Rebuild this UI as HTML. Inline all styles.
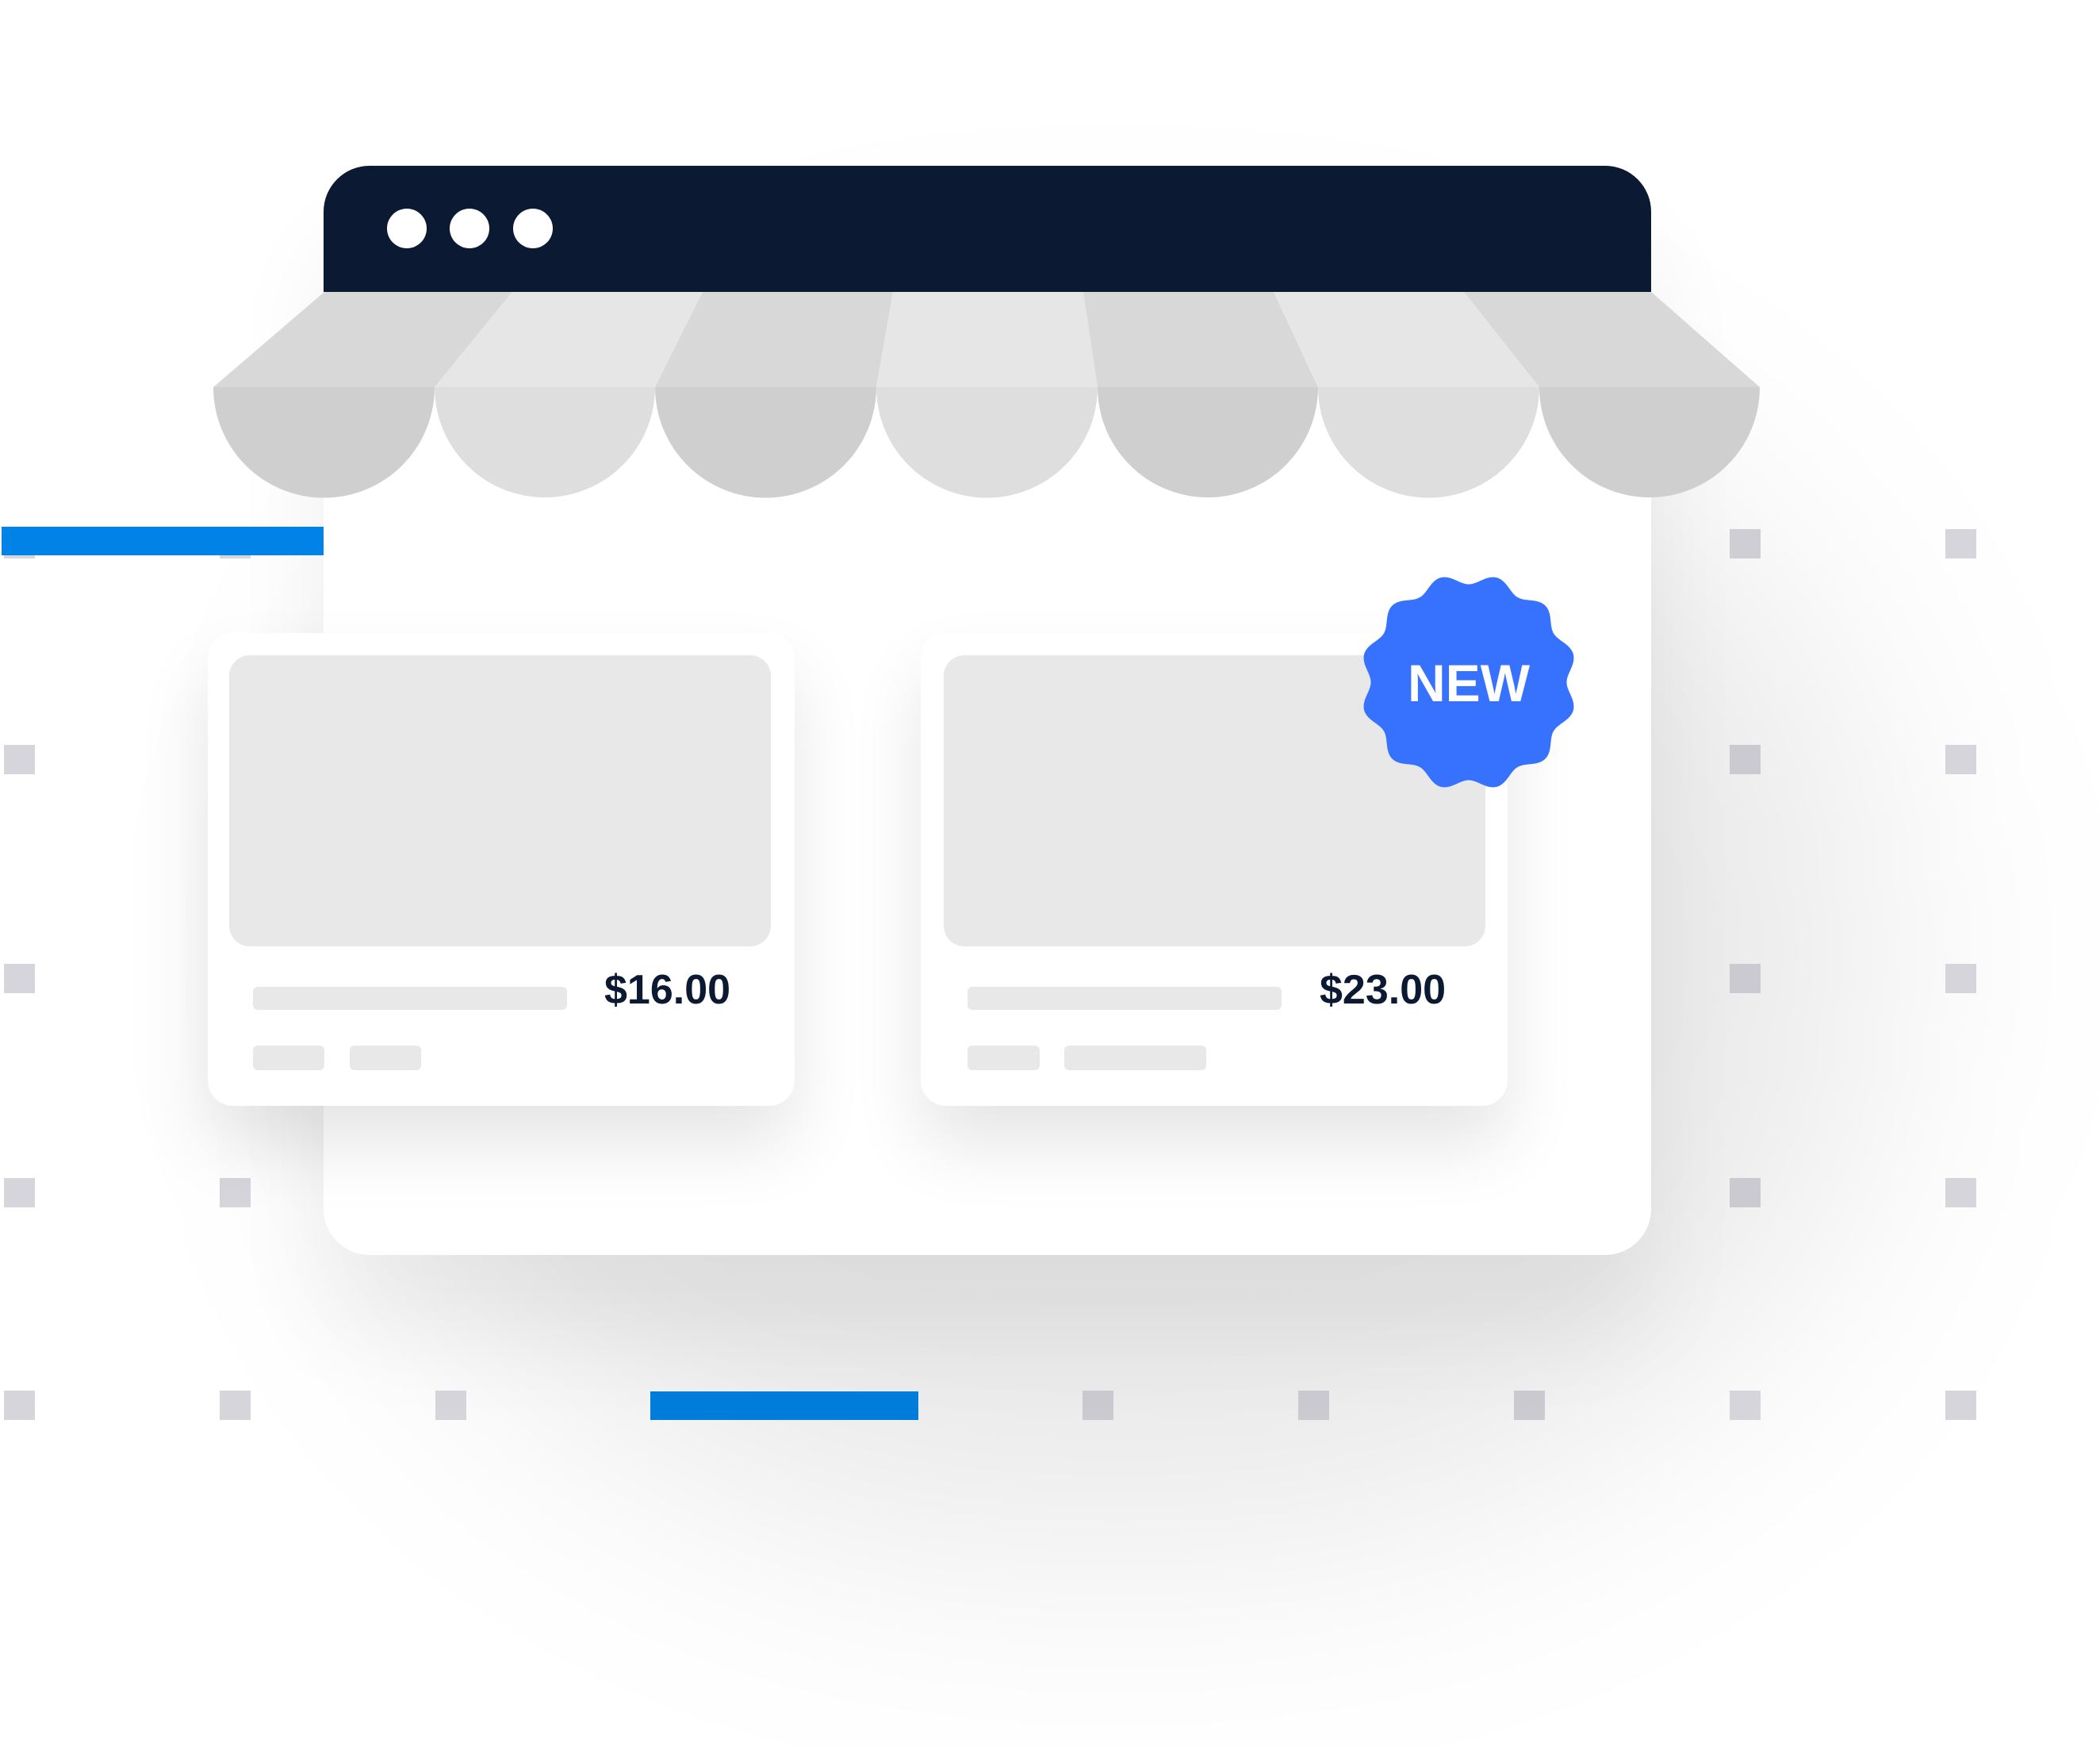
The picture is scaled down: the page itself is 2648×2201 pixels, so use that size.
<!DOCTYPE html>
<html><head><meta charset="utf-8"><style>
html,body{margin:0;padding:0;background:#fff;}
body{width:2648px;height:2201px;position:relative;overflow:hidden;font-family:"Liberation Sans",sans-serif;}
.abs{position:absolute;}
.sq{position:absolute;width:39px;height:37px;background:#d6d5db;}
.glow{position:absolute;left:460px;top:450px;width:1900px;height:1500px;border-radius:45%;background:rgba(0,0,0,0.085);filter:blur(160px);}
.win{position:absolute;left:408px;top:209px;width:1674px;height:1373px;background:#fff;border-radius:58px;box-shadow:0 100px 200px rgba(0,0,0,0.06);}
.bar{position:absolute;left:408px;top:209px;width:1674px;height:159px;background:#0b1933;border-radius:58px 58px 0 0;}
.dot{position:absolute;width:50px;height:50px;border-radius:50%;background:#fff;top:263px;}
.card{position:absolute;top:798px;width:740px;height:596px;background:#fff;border-radius:32px;box-shadow:0 50px 90px rgba(0,0,0,0.10);}
.img{position:absolute;left:27px;top:28px;width:683px;height:367px;background:#e8e8e8;border-radius:26px;}
.pill{position:absolute;background:#e8e8e8;border-radius:6px;}
.price{position:absolute;top:1218px;font-size:52px;font-weight:bold;color:#0b1933;line-height:60px;}
.blue{position:absolute;background:#0082e6;}
</style></head><body>
<div class="glow"></div>
<div class="sq" style="left:5px;top:667px"></div><div class="sq" style="left:277px;top:667px"></div>
<div class="sq" style="left:2181px;top:667px;background:#cfced4"></div><div class="sq" style="left:2453px;top:667px"></div>
<div class="sq" style="left:5px;top:939px"></div><div class="sq" style="left:2181px;top:939px;background:#cbcad0"></div><div class="sq" style="left:2453px;top:939px"></div>
<div class="sq" style="left:5px;top:1215px"></div><div class="sq" style="left:2181px;top:1215px;background:#cbcad0"></div><div class="sq" style="left:2453px;top:1215px"></div>
<div class="sq" style="left:5px;top:1485px"></div><div class="sq" style="left:277px;top:1485px"></div><div class="sq" style="left:2181px;top:1485px;background:#cbcad0"></div><div class="sq" style="left:2453px;top:1485px"></div>
<div class="sq" style="left:5px;top:1753px"></div><div class="sq" style="left:277px;top:1753px"></div><div class="sq" style="left:549px;top:1753px"></div>
<div class="sq" style="left:1365px;top:1753px;background:#cbcad0"></div><div class="sq" style="left:1637px;top:1753px;background:#cbcad0"></div><div class="sq" style="left:1909px;top:1753px;background:#cbcad0"></div><div class="sq" style="left:2181px;top:1753px"></div><div class="sq" style="left:2453px;top:1753px"></div>

<div class="win"></div>
<div class="bar"></div>
<div class="dot" style="left:488px"></div><div class="dot" style="left:567px"></div><div class="dot" style="left:647px"></div>

<svg class="abs" style="left:0;top:0" width="2648" height="2201" viewBox="0 0 2648 2201">
<polygon points="409,368 646,368 548,488 269,488" fill="#d8d8d8"/>
<polygon points="646,368 886,368 826,488 548,488" fill="#e6e6e6"/>
<polygon points="886,368 1126,368 1105,488 826,488" fill="#d8d8d8"/>
<polygon points="1126,368 1366,368 1384,488 1105,488" fill="#e6e6e6"/>
<polygon points="1366,368 1606,368 1662,488 1384,488" fill="#d8d8d8"/>
<polygon points="1606,368 1846,368 1941,488 1662,488" fill="#e6e6e6"/>
<polygon points="1846,368 2082,368 2219,488 1941,488" fill="#d8d8d8"/>
<path d="M269,488 A139,139 0 0 0 548,488Z" fill="#cfcfcf"/>
<path d="M548,488 A139,139 0 0 0 826,488Z" fill="#dedede"/>
<path d="M826,488 A139,139 0 0 0 1105,488Z" fill="#cfcfcf"/>
<path d="M1105,488 A139,139 0 0 0 1384,488Z" fill="#dedede"/>
<path d="M1384,488 A139,139 0 0 0 1662,488Z" fill="#cfcfcf"/>
<path d="M1662,488 A139,139 0 0 0 1941,488Z" fill="#dedede"/>
<path d="M1941,488 A139,139 0 0 0 2219,488Z" fill="#cfcfcf"/>
</svg>

<div class="card" style="left:262px">
 <div class="img"></div>
 <div class="pill" style="left:57px;top:446px;width:396px;height:29px"></div>
 <div class="pill" style="left:57px;top:520px;width:90px;height:31px"></div>
 <div class="pill" style="left:179px;top:520px;width:90px;height:31px"></div>
</div>
<div class="price" style="left:762px">$16.00</div>
<div class="card" style="left:1161px">
 <div class="img" style="left:29px"></div>
 <div class="pill" style="left:59px;top:446px;width:396px;height:29px"></div>
 <div class="pill" style="left:59px;top:520px;width:91px;height:31px"></div>
 <div class="pill" style="left:181px;top:520px;width:179px;height:31px"></div>
</div>
<div class="price" style="left:1664px">$23.00</div>

<svg class="abs" style="left:1712px;top:720px" width="280" height="280" viewBox="-140 -140 280 280">
<path id="badge" fill="#3772ff" d=""/>
<text x="0" y="24" text-anchor="middle" font-family="Liberation Sans,sans-serif" font-weight="bold" font-size="66" fill="#fff">NEW</text>
</svg>
<script>
(function(){var p=[];for(var i=0;i<=720;i++){var t=i/720*2*Math.PI;var r=130-6.5*Math.cos(12*t);p.push((i?'L':'M')+(r*Math.cos(t)).toFixed(2)+','+(r*Math.sin(t)).toFixed(2));}document.getElementById('badge').setAttribute('d',p.join('')+'Z');})();
</script>

<div class="blue" style="left:2px;top:664px;width:406px;height:36px"></div>
<div class="blue" style="left:820px;top:1754px;width:338px;height:36px;background:#007ddb"></div>
</body></html>
